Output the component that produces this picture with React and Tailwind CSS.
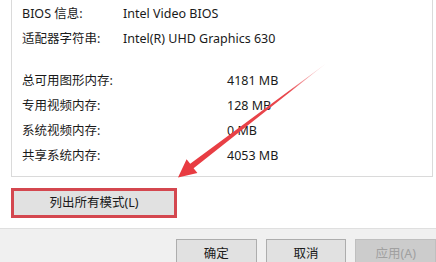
import React from 'react'

const font = { fontFamily: '"Noto Sans", "Noto Sans CJK SC", sans-serif' }

function Row({ label, value, labelW }) {
  return (
    <div className="h-[25px] flex items-center">
      <div className={labelW}>{label}</div>
      <div>{value}</div>
    </div>
  )
}

function Arrow() {
  return (
    <svg className="absolute left-0 top-0 pointer-events-none" width="436" height="262">
      <defs>
        <linearGradient id="ag" x1="326" y1="64" x2="178" y2="177" gradientUnits="userSpaceOnUse">
          <stop offset="0" stopColor="#f3a0a4" stopOpacity="0.3" />
          <stop offset="0.25" stopColor="#e8474d" />
          <stop offset="1" stopColor="#e83a40" />
        </linearGradient>
      </defs>
      <polygon
        points="326,63.5 193.6,168.2 197.4,173 178,177.5 186.6,159.2 190.2,163.8"
        fill="url(#ag)"
      />
    </svg>
  )
}

export default function App() {
  return (
    <div className="relative w-[436px] h-[262px] bg-white overflow-hidden text-[12.5px] text-[#1a1a1a]" style={font}>
      {/* info panel */}
      <div className="ml-[11px] w-[422px] h-[177px] border-l border-r border-b border-[#dadada] pl-[10px] pt-[2px]">
        <Row label="BIOS 信息:" value="Intel Video BIOS" labelW="w-[101px]" />
        <Row label="适配器字符串:" value="Intel(R) UHD Graphics 630" labelW="w-[101px]" />
        <div className="h-[17px]" />
        <Row label="总可用图形内存:" value="4181 MB" labelW="w-[205px]" />
        <Row label="专用视频内存:" value="128 MB" labelW="w-[205px]" />
        <Row label="系统视频内存:" value="0 MB" labelW="w-[205px]" />
        <Row label="共享系统内存:" value="4053 MB" labelW="w-[205px]" />
      </div>

      {/* list modes button */}
      <div className="pl-[11px] pt-[11px] h-[51px]">
        <div className="w-[166px] h-[30px] border-[3px] border-[#d4474f] bg-[#e1e1e1] flex items-center justify-center">
          列出所有模式(L)
        </div>
      </div>

      {/* footer */}
      <div className="border-t border-[#dfdfdf] bg-[#f0f0f0] h-[40px] pt-[10px] pl-[176px] flex gap-[9px]">
        <div className="w-[86px] h-[30px] border border-[#adadad] bg-[#e1e1e1] flex items-center justify-center">确定</div>
        <div className="w-[86px] h-[30px] border border-[#adadad] bg-[#e1e1e1] flex items-center justify-center">取消</div>
        <div className="w-[86px] h-[30px] border border-[#bfbfbf] bg-[#cccccc] text-[#a0a0a0] flex items-center justify-center">应用(A)</div>
      </div>

      <Arrow />
    </div>
  )
}
